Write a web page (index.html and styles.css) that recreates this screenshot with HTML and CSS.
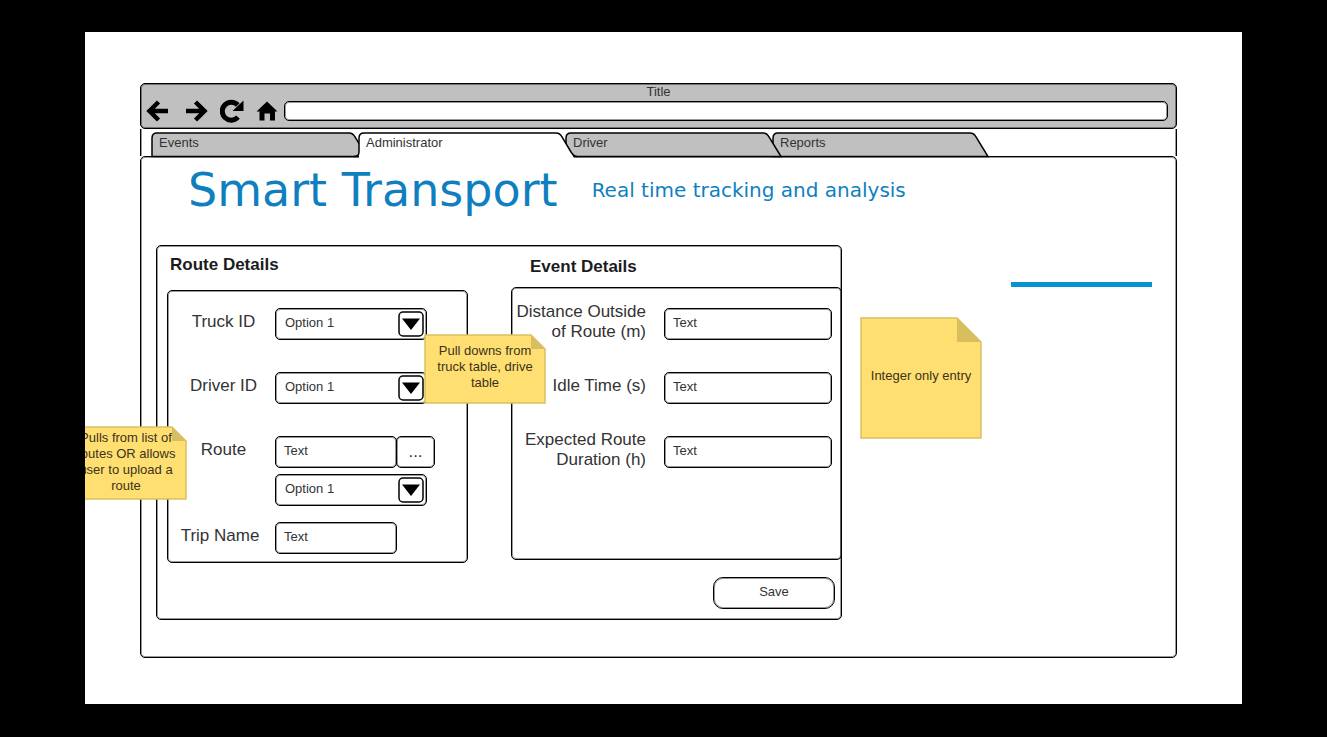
FILE: index.html
```html
<!DOCTYPE html>
<html lang="en">
<head>
<meta charset="utf-8">
<title>Smart Transport</title>
<link rel="stylesheet" href="styles.css">
</head>
<body>
<main class="slide">
  <div class="window">
    <header class="chrome outlined">
      <div class="window-title">Title</div>
      <div class="toolbar">
        <button class="tool" type="button" aria-label="Back"><svg width="24" height="24" viewBox="0 0 24 24"><path d="M22 12H5M12.500 3L3.500 12l9 9" fill="none" stroke="#000" stroke-width="4.500"/></svg></button>
        <button class="tool" type="button" aria-label="Forward"><svg width="24" height="24" viewBox="0 0 24 24"><path d="M2 12h17M11.500 3l9 9-9 9" fill="none" stroke="#000" stroke-width="4.500"/></svg></button>
        <button class="tool tool-reload" type="button" aria-label="Reload"><svg width="24" height="24" viewBox="0 0 24 24"><path d="M18 18.200A9 9 0 1 1 17.800 6" fill="none" stroke="#000" stroke-width="5"/><path d="M23.500 1.500v10.500H12.500z"/></svg></button>
        <button class="tool" type="button" aria-label="Home"><svg width="24" height="24" viewBox="0 0 24 24"><path d="M12 2.500l10.500 10H20v9h-5v-7H9.500v7h-5v-9H1.500z"/></svg></button>
        <input class="address outlined" type="text" aria-label="Address">
      </div>
    </header>
    <nav class="tabs">
      <button class="tab tab-events" type="button"><svg class="tab-shape" width="218" height="26" viewBox="0 0 218 26"><path d="M1 24.500V6Q1 1 6 1H198Q202 1 204 5L216 24.500z"/></svg><span>Events</span></button>
      <button class="tab tab-active" type="button"><svg class="tab-shape" width="218" height="26" viewBox="0 0 218 26"><path class="tab-mask" d="M1 26V6Q1 1 6 1H198Q202 1 204 5L216 26z"/><path d="M1 20V6Q1 1 6 1H198Q202 1 204 5L213 20Q216 24.500 219 24.500M1 20Q1 24.500-4 24.500"/></svg><span>Administrator</span></button>
      <button class="tab tab-driver" type="button"><svg class="tab-shape" width="218" height="26" viewBox="0 0 218 26"><path d="M1 24.500V6Q1 1 6 1H198Q202 1 204 5L216 24.500z"/></svg><span>Driver</span></button>
      <button class="tab" type="button"><svg class="tab-shape" width="218" height="26" viewBox="0 0 218 26"><path d="M1 24.500V6Q1 1 6 1H198Q202 1 204 5L216 24.500z"/></svg><span>Reports</span></button>
    </nav>
    <section class="page outlined">
      <div class="brand">
        <h1>Smart Transport</h1>
        <p>Real time tracking and analysis</p>
      </div>
      <div class="columns">
        <form class="panel outlined">
          <section class="route">
            <h2>Route Details</h2>
            <div class="box route-box outlined">
              <div class="route-row">
                <label for="truck">Truck ID</label>
                <div class="select"><select id="truck" class="outlined"><option>Option 1</option></select><svg class="arrow" width="26" height="26" viewBox="0 0 26 26"><rect x="1" y="1" width="24" height="24" rx="4"/><path d="M4 7.500h18L13 19z"/></svg></div>
              </div>
              <div class="route-row">
                <label for="driver">Driver ID</label>
                <div class="select"><select id="driver" class="outlined"><option>Option 1</option></select><svg class="arrow" width="26" height="26" viewBox="0 0 26 26"><rect x="1" y="1" width="24" height="24" rx="4"/><path d="M4 7.500h18L13 19z"/></svg></div>
              </div>
              <div class="route-row">
                <label for="route">Route</label>
                <div class="stack">
                  <div class="joined"><input id="route" class="field short outlined" type="text" value="Text"><button class="browse outlined" type="button">...</button></div>
                  <div class="select"><select class="outlined" aria-label="Saved route"><option>Option 1</option></select><svg class="arrow" width="26" height="26" viewBox="0 0 26 26"><rect x="1" y="1" width="24" height="24" rx="4"/><path d="M4 7.500h18L13 19z"/></svg></div>
                </div>
              </div>
              <div class="route-row trip">
                <label for="trip">Trip Name</label>
                <input id="trip" class="field short outlined" type="text" value="Text">
              </div>
            </div>
          </section>
          <section class="event">
            <h2>Event Details</h2>
            <div class="box event-box outlined">
              <div class="event-row"><label for="distance">Distance Outside<br>of Route (m)</label><input id="distance" class="field outlined" type="text" value="Text"></div>
              <div class="event-row"><label for="idle">Idle Time (s)</label><input id="idle" class="field outlined" type="text" value="Text"></div>
              <div class="event-row"><label for="duration">Expected Route<br>Duration (h)</label><input id="duration" class="field outlined" type="text" value="Text"></div>
            </div>
            <button class="save outlined" type="submit">Save</button>
          </section>
        </form>
        <aside class="side">
          <div class="rule"></div>
          <div class="note note-large">
            <svg class="paper" viewBox="0 0 122 122" preserveAspectRatio="none"><path class="sheet" d="M1 1H97L121 25V121H1z"/><path class="fold" d="M97 1L121 25H97z"/></svg>
            <p>Integer only entry</p>
          </div>
        </aside>
      </div>
    </section>
  </div>
  <div class="note note-route">
    <svg class="paper" viewBox="0 0 122 74" preserveAspectRatio="none"><path class="sheet" d="M1 1H107L121 15V73H1z"/><path class="fold" d="M107 1L121 15H107z"/></svg>
    <p>Pulls from list of<br>routes OR allows<br>user to upload a<br>route</p>
  </div>
  <div class="note note-pulldown">
    <svg class="paper" viewBox="0 0 122 70" preserveAspectRatio="none"><path class="sheet" d="M1 1H107L121 15V69H1z"/><path class="fold" d="M107 1L121 15H107z"/></svg>
    <p>Pull downs from<br>truck table, drive<br>table</p>
  </div>
</main>
</body>
</html>
```
FILE: styles.css
```css
* {
  box-sizing: border-box;
}

body {
  margin: 0;
  min-height: 100vh;
  padding: 32px 85px 33px;
  display: flex;
  background: #000;
  color: #333;
  font: 13px/16px "Liberation Sans", Arial, sans-serif;
}

h1, h2, p {
  margin: 0;
}

button, input, select {
  margin: 0;
  padding: 0;
  border: 0;
  background: none;
  color: inherit;
  font: inherit;
}

.outlined {
  border: 1px solid #000;
  border-radius: 5px;
  box-shadow: inset 0 0 0 1px rgba(0, 0, 0, 0.4);
}

.slide {
  position: relative;
  flex: 1;
  display: flex;
  padding: 51px 65px 46px 55px;
  overflow: hidden;
  background: #fff;
}

.window {
  flex: 1;
  display: flex;
  flex-direction: column;
}

/* Browser chrome */
.chrome {
  height: 46px;
  padding-right: 8px;
  background: #c0c0c0;
}

.window-title {
  padding-left: 8px;
  line-height: 15px;
  text-align: center;
}

.toolbar {
  display: flex;
  align-items: center;
  padding-left: 5px;
}

.tool {
  display: flex;
  width: 24px;
  height: 24px;
  margin-right: 14px;
}

.tool svg {
  flex: 1;
}

.tool:nth-child(2) {
  margin-right: 12px;
}

.tool-reload {
  margin-right: 11px;
}

.tool:nth-child(4) {
  margin-right: 5px;
}

.address {
  flex: 1;
  height: 20px;
  padding: 0 8px;
  background: #fff;
}

/* Tabs */
.tabs {
  display: flex;
  padding: 3px 0 0 10px;
  border: solid #000;
  border-width: 0 1px;
  box-shadow: inset 1px 0 rgba(0, 0, 0, 0.4), inset -1px 0 rgba(0, 0, 0, 0.4);
}

.tab {
  position: relative;
  width: 207px;
  height: 24px;
  padding: 0 8px 3px;
  text-align: left;
}

.tab span {
  position: relative;
}

.tab-shape {
  position: absolute;
  left: 0;
  top: 0;
  overflow: visible;
  fill: #c0c0c0;
  stroke: #000;
  stroke-width: 1.5;
}

.tab-events {
  z-index: 1;
}

.tab-active {
  z-index: 3;
}

.tab-active .tab-shape {
  fill: none;
}

.tab-active .tab-mask {
  fill: #fff;
  stroke: none;
}

.tab-driver {
  z-index: 1;
}

/* Page */
.page {
  flex: 1;
  padding: 0 0 36px 15px;
}

.brand {
  display: flex;
  align-items: center;
  gap: 34px;
  height: 88px;
  padding: 0 0 22px 32px;
  color: #0f7fbf;
  font-family: "DejaVu Sans", sans-serif;
  white-space: nowrap;
}

.brand h1 {
  font-size: 46px;
  font-weight: 400;
  line-height: 52px;
}

.brand p {
  font-size: 20px;
  line-height: 24px;
}

.columns {
  display: grid;
  grid-template-columns: 686fr 334fr;
}

.panel {
  display: flex;
  justify-content: space-between;
  padding-left: 10px;
}

h2 {
  color: #1c1c1c;
  font-size: 17px;
  line-height: 20px;
}

.route {
  width: 301px;
  padding: 9px 0 0;
}

.route h2 {
  padding-left: 3px;
}

.box {
  color: #333;
}

.route-box {
  margin-top: 15px;
  padding: 17px 0 8px;
}

.route-row {
  display: grid;
  grid-template-columns: 107px 1fr;
  margin-bottom: 32px;
}

.route-row:nth-child(3) {
  margin-bottom: 16px;
}

.route-row.trip {
  margin-bottom: 0;
}

label {
  font-size: 17px;
  line-height: 20px;
}

.route-row label {
  padding: 4px 0 0 4px;
  text-align: center;
}

.route-row.trip label {
  padding: 4px 3px 0 0;
}

.field {
  height: 32px;
  padding: 0 8px 3px;
}

.short {
  width: 122px;
}

.stack {
  display: grid;
  gap: 6px;
}

.joined {
  display: flex;
}

.browse {
  width: 39px;
  margin-left: -1px;
  font-size: 17px;
}

.select {
  position: relative;
  width: 152px;
  height: 32px;
}

.select select {
  appearance: none;
  width: 100%;
  height: 32px;
  padding: 0 30px 3px 9px;
}

.arrow {
  position: absolute;
  right: 3px;
  top: 3px;
  pointer-events: none;
}

.arrow rect {
  fill: #fff;
  stroke: #000;
  stroke-width: 1.5;
}

.event {
  display: flex;
  flex-direction: column;
  width: 331px;
  margin-right: -1px;
  padding-top: 11px;
}

.event h2 {
  padding-left: 19px;
}

.event-box {
  min-height: 273px;
  margin-top: 10px;
  padding: 14px 9px 0 6px;
}

.event-row {
  display: flex;
  align-items: center;
  justify-content: flex-end;
  gap: 18px;
  min-height: 43px;
  margin-bottom: 21px;
}

.event-row label {
  padding-bottom: 3px;
  text-align: right;
  white-space: nowrap;
}

.event-row .field {
  width: 168px;
}

.save {
  align-self: flex-end;
  width: 122px;
  height: 32px;
  margin: 17px 7px 10px 0;
  padding-bottom: 3px;
  border-radius: 10px;
}

/* Side column */
.side {
  padding: 37px 24px 0 18px;
}

.rule {
  width: 141px;
  height: 5px;
  margin-left: auto;
  background: #0693d0;
}

/* Sticky notes */
.note {
  display: grid;
  place-items: center;
  width: 122px;
  color: #3a331a;
  text-align: center;
}

.note p {
  position: relative;
  white-space: nowrap;
}

.paper {
  position: absolute;
  inset: 0;
  width: 100%;
  height: 100%;
}

.sheet {
  fill: #ffdf72;
  stroke: #d9c062;
  stroke-width: 1.5;
}

.fold {
  fill: #d9be60;
}

.note-large {
  position: relative;
  height: 122px;
  margin-top: 30px;
  padding-bottom: 4px;
}

.note-route {
  position: absolute;
  left: -20px;
  top: 394px;
  height: 74px;
  padding-bottom: 2px;
}

.note-pulldown {
  position: absolute;
  left: 339px;
  top: 302px;
  height: 70px;
  padding-bottom: 4px;
}
```
